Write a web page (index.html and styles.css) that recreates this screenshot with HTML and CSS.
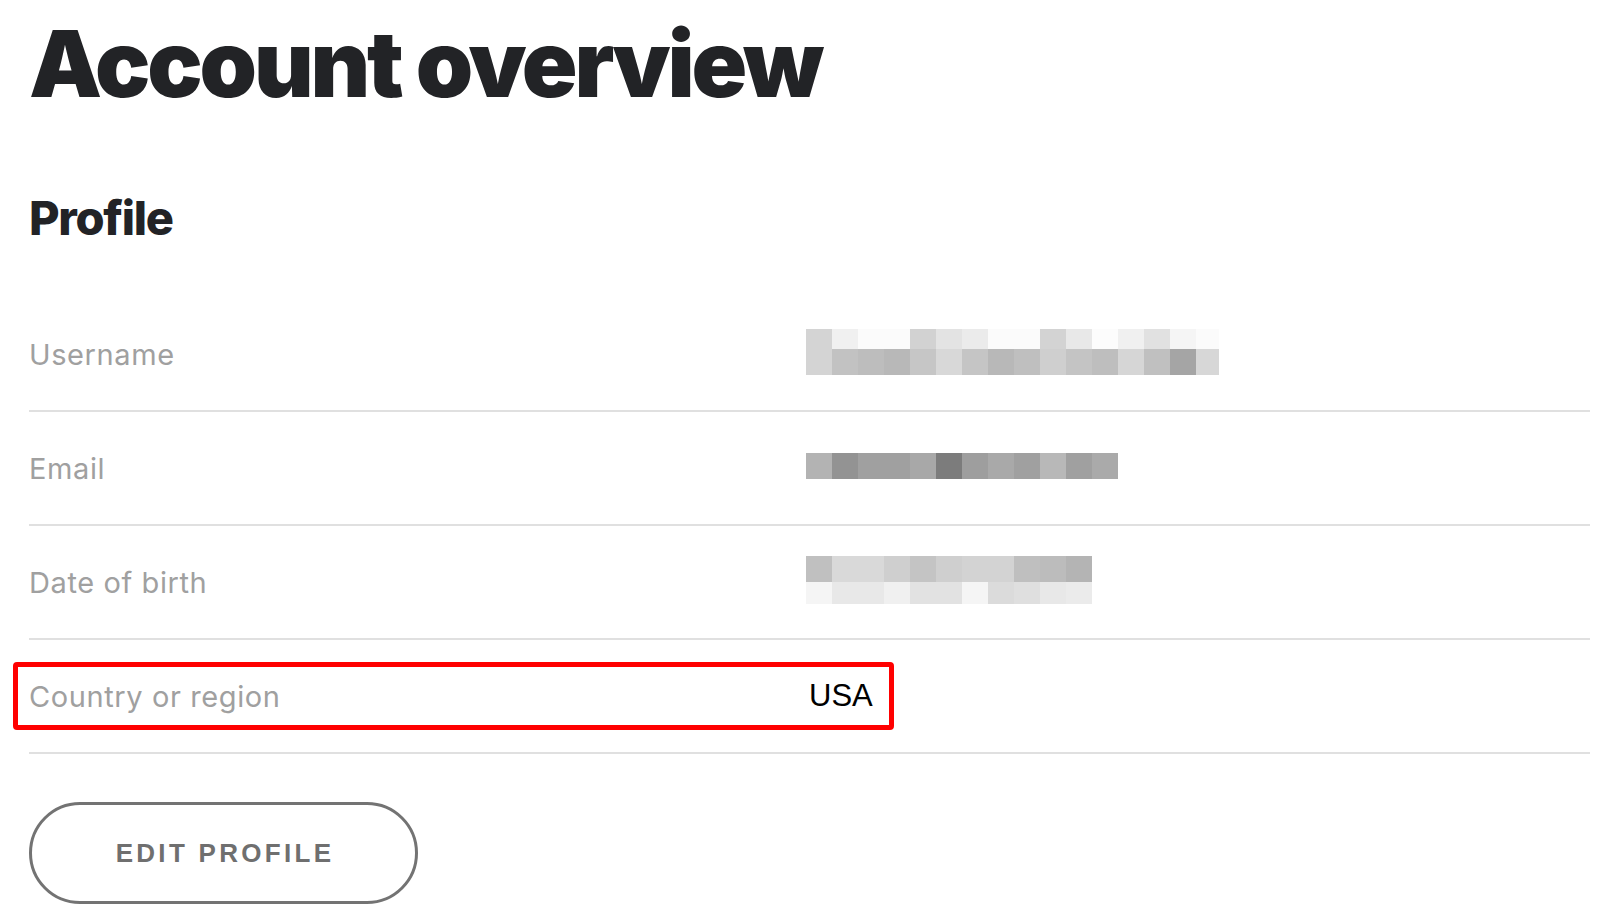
FILE: index.html
```html
<!DOCTYPE html>
<html lang="en">
<head>
<meta charset="utf-8">
<title>Account overview</title>
<link rel="stylesheet" href="styles.css">
</head>
<body>
<main class="page">
  <h1 class="title">Account overview</h1>
  <section class="profile">
    <h2 class="section-title">Profile</h2>
    <div class="rows">
      <div class="row">
        <span class="label">Username</span>
        <div class="value">
          <div class="pix pix-user">
            <i style="background:#d4d4d4"></i><i style="background:#f0f0f0"></i><i style="background:#fbfbfb"></i><i style="background:#fbfbfb"></i><i style="background:#d2d2d2"></i><i style="background:#e3e3e3"></i><i style="background:#ebebeb"></i><i style="background:#fbfbfb"></i><i style="background:#fbfbfb"></i><i style="background:#d3d3d3"></i><i style="background:#e8e8e8"></i><i style="background:#fcfcfc"></i><i style="background:#f0f0f0"></i><i style="background:#e1e1e1"></i><i style="background:#f5f5f5"></i><i style="background:#fbfbfb"></i>
            <i style="background:#d4d4d4"></i><i style="background:#c2c2c2"></i><i style="background:#bdbdbd"></i><i style="background:#b8b8b8"></i><i style="background:#c6c6c6"></i><i style="background:#d8d8d8"></i><i style="background:#c5c5c5"></i><i style="background:#b8b8b8"></i><i style="background:#bfbfbf"></i><i style="background:#cfcfcf"></i><i style="background:#c4c4c4"></i><i style="background:#bebebe"></i><i style="background:#d6d6d6"></i><i style="background:#c0c0c0"></i><i style="background:#a5a5a5"></i><i style="background:#d7d7d7"></i>
          </div>
        </div>
      </div>
      <div class="row">
        <span class="label">Email</span>
        <div class="value">
          <div class="pix pix-email">
            <i style="background:#b3b3b3"></i><i style="background:#939393"></i><i style="background:#a0a0a0"></i><i style="background:#a0a0a0"></i><i style="background:#a8a8a8"></i><i style="background:#7c7c7c"></i><i style="background:#9e9e9e"></i><i style="background:#a9a9a9"></i><i style="background:#a0a0a0"></i><i style="background:#b8b8b8"></i><i style="background:#a0a0a0"></i><i style="background:#aaaaaa"></i>
          </div>
        </div>
      </div>
      <div class="row">
        <span class="label">Date of birth</span>
        <div class="value">
          <div class="pix pix-dob">
            <i style="background:#c0c0c0"></i><i style="background:#d9d9d9"></i><i style="background:#d9d9d9"></i><i style="background:#cfcfcf"></i><i style="background:#c4c4c4"></i><i style="background:#cfcfcf"></i><i style="background:#d3d3d3"></i><i style="background:#d3d3d3"></i><i style="background:#bfbfbf"></i><i style="background:#bcbcbc"></i><i style="background:#b4b4b4"></i>
            <i style="background:#f5f5f5"></i><i style="background:#e8e8e8"></i><i style="background:#e8e8e8"></i><i style="background:#f0f0f0"></i><i style="background:#e2e2e2"></i><i style="background:#e2e2e2"></i><i style="background:#f5f5f5"></i><i style="background:#dbdbdb"></i><i style="background:#dfdfdf"></i><i style="background:#e8e8e8"></i><i style="background:#ebebeb"></i>
          </div>
        </div>
      </div>
      <div class="row">
        <span class="label">Country or region</span>
        <div class="value"><span class="value-text">USA</span></div>
      </div>
    </div>
    <button class="btn" type="button">EDIT PROFILE</button>
  </section>
  <div class="highlight" aria-hidden="true"></div>
</main>
</body>
</html>
```

FILE: styles.css
```css
* { box-sizing: border-box; }

html, body {
  margin: 0;
  padding: 0;
  background: #ffffff;
}

body {
  font-family: "Inter", "Liberation Sans", Arial, sans-serif;
  color: #222326;
}

.page {
  position: relative;
  width: 1608px;
  height: 920px;
  padding: 0 18px 0 29px;
  overflow: hidden;
}

.title {
  margin: 0;
  padding-top: 14px;
  font-size: 92px;
  line-height: 100px;
  font-weight: 900;
  letter-spacing: -3.2px;
  color: #222326;
  white-space: nowrap;
}

.section-title {
  margin: 0;
  padding-top: 76px;
  font-size: 47px;
  line-height: 56px;
  font-weight: 800;
  letter-spacing: -1.3px;
  color: #222326;
}

.rows {
  margin-top: 52px;
  display: flex;
  flex-direction: column;
}

.row {
  display: grid;
  grid-template-columns: 777px 1fr;
  align-items: center;
  height: 114px;
  border-bottom: 2px solid #e0e0e0;
}

.label {
  font-size: 29px;
  color: #a0a0a0;
  letter-spacing: 0.6px;
}

.value {
  display: flex;
  align-items: center;
}

.value-text {
  font-family: "Liberation Sans", Arial, sans-serif;
  font-size: 31px;
  color: #000000;
  padding-left: 3px;
}

.pix {
  display: grid;
  margin-bottom: 5px;
}

.pix i {
  display: block;
}

.pix-user {
  grid-template-columns: repeat(15, 26px) 23px;
  grid-template-rows: 20px 26px;
}

.pix-email {
  grid-template-columns: repeat(12, 26px);
  grid-template-rows: 26px;
}

.pix-dob {
  grid-template-columns: repeat(11, 26px);
  grid-template-rows: 26px 22px;
}

.btn {
  margin-top: 48px;
  width: 389px;
  height: 102px;
  border: 3px solid #737373;
  border-radius: 51px;
  background: #ffffff;
  color: #6f6f6f;
  font-family: "Liberation Sans", Arial, sans-serif;
  font-weight: 700;
  font-size: 26px;
  letter-spacing: 3.3px;
  padding: 0 0 0 3px;
  cursor: pointer;
}

.highlight {
  position: absolute;
  left: 13px;
  top: 662px;
  width: 881px;
  height: 68px;
  border: 5px solid #ff0000;
  border-radius: 4px;
  pointer-events: none;
}
```
